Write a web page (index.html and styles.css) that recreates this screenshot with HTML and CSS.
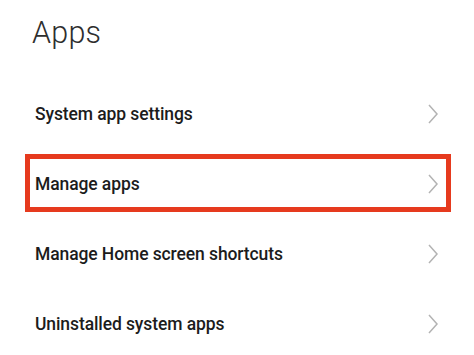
FILE: index.html
```html
<!DOCTYPE html>
<html>
<head>
    <title>Apps</title>
    <meta charset="UTF-8">
    <meta name="viewport" content="width=device-width, initial-scale=1.0">
    <link rel="stylesheet" href="styles.css">
</head>
<body>
    <div class="page">
        <h1 class="title">Apps</h1>

        <ul class="list">
            <li class="row">
                <span class="label">System app settings</span>
                <svg class="chev" width="10" height="20" viewBox="0 0 10 20"><path d="M1 1 L9 10 L1 19" /></svg>
            </li>
            <li class="row row-marked">
                <span class="label">Manage apps</span>
                <svg class="chev" width="10" height="20" viewBox="0 0 10 20"><path d="M1 1 L9 10 L1 19" /></svg>
            </li>
            <li class="row">
                <span class="label">Manage Home screen shortcuts</span>
                <svg class="chev" width="10" height="20" viewBox="0 0 10 20"><path d="M1 1 L9 10 L1 19" /></svg>
            </li>
            <li class="row">
                <span class="label">Uninstalled system apps</span>
                <svg class="chev" width="10" height="20" viewBox="0 0 10 20"><path d="M1 1 L9 10 L1 19" /></svg>
            </li>
        </ul>
    </div>
</body>
</html>
```

FILE: styles.css
```css
* { margin: 0; padding: 0; box-sizing: border-box; }
body { font-family: Roboto, 'Liberation Sans', sans-serif; background: #fff; color: #1c1c1c; overflow: hidden; }
.page { width: 474px; }
.title { font-size: 30.5px; font-weight: 300; color: #2e2e2e; height: 79px; line-height: 1; padding: 18px 0 0 32px; letter-spacing: 0.2px; }
.list { list-style: none; }
.row { position: relative; display: flex; align-items: center; justify-content: space-between; height: 70px; padding: 0 36px 0 35px; }
.label { font-size: 17.5px; font-weight: 500; letter-spacing: -0.1px; }
.chev { fill: none; stroke: #b3b3b3; stroke-width: 1.5; }
.row-marked::after { content: ''; position: absolute; left: 25px; right: 23px; top: 5px; bottom: 7px; border: 5px solid #e63a1e; }
```
